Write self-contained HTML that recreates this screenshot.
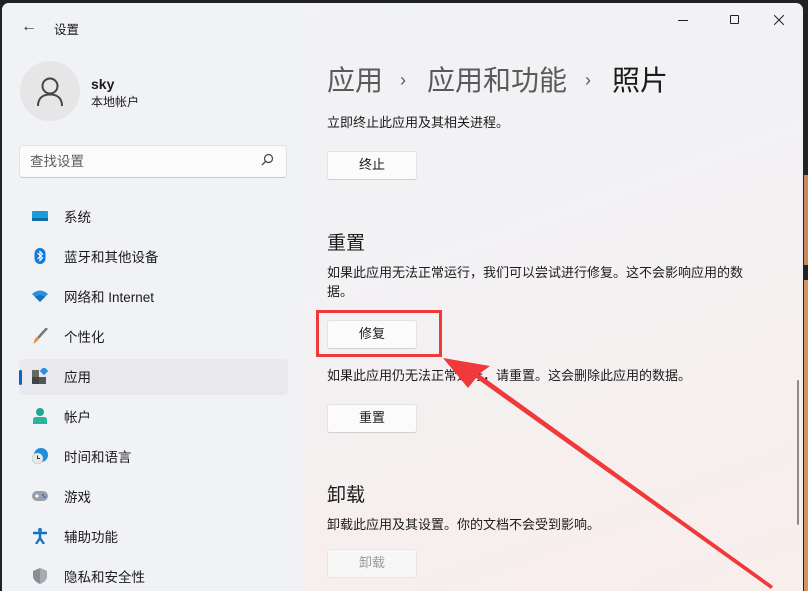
<!DOCTYPE html>
<html><head><meta charset="utf-8"><style>
*{margin:0;padding:0;box-sizing:border-box}
html,body{width:808px;height:591px;overflow:hidden}
body{background:#202225;font-family:"Liberation Sans","Noto Sans CJK SC",sans-serif;color:#1a1a1a;position:relative}
.win{position:absolute;left:2px;top:3px;width:801px;height:600px;border-radius:7px 7px 0 0;background:linear-gradient(160deg,#f2f3f6 0%,#f2f2f5 40%,#f6efee 75%,#f8eeec 100%);overflow:hidden}
.side{position:absolute;left:0;top:0;width:300px;height:600px;background:#f1f2f5}
.a{position:absolute;white-space:nowrap}
.nav{position:absolute;left:17px;width:269px;height:36px}
.nav .t{position:absolute;left:45px;top:7px;font-size:13.5px;color:#1b1b1b}
.nav .i{position:absolute;left:13px;top:9px;width:16px;height:16px}
.btn{position:absolute;left:325px;width:90px;height:29px;background:#fbfbfb;border:1px solid #e2e2e2;border-bottom-color:#cfcfcf;border-radius:3px;font-size:13px;text-align:center;line-height:26px;color:#1b1b1b}
.p{font-size:13px;color:#1b1b1b}
.bc{position:absolute;top:56px;font-size:28px;color:#5a5a5a}
.sep{position:absolute;top:67px;font-size:18px;color:#5a5a5a}
</style></head><body>
<div class="win">
<div class="side"></div>
<div class="a" style="left:19px;top:15px;font-size:16px;color:#333">&#8592;</div>
<div class="a" style="left:52px;top:16px;font-size:12.5px">设置</div>
<div class="a" style="left:18px;top:58px;width:60px;height:60px;border-radius:50%;background:#e6e6e6"></div>
<svg class="a" style="left:34px;top:74px" width="28" height="30" viewBox="0 0 28 30"><circle cx="14" cy="9" r="7.5" fill="none" stroke="#444" stroke-width="2"/><path d="M2 29 C2 20 8 17.5 14 17.5 C20 17.5 26 20 26 29" fill="none" stroke="#444" stroke-width="2"/></svg>
<div class="a" style="left:89px;top:73px;font-size:14px;font-weight:bold">sky</div>
<div class="a" style="left:89px;top:90px;font-size:12px">本地帐户</div>
<div class="a" style="left:17px;top:142px;width:268px;height:33px;background:#fbfbfb;border:1px solid #e3e3e3;border-bottom-color:#c8c8c8;border-radius:4px"></div>
<div class="a" style="left:28px;top:147px;font-size:13.5px;color:#5c5c5c">查找设置</div>
<svg class="a" style="left:259px;top:150px" width="13" height="13" viewBox="0 0 13 13"><circle cx="7.5" cy="5.5" r="4" fill="none" stroke="#444" stroke-width="1.2"/><path d="M4.6 8.4 L1 12" stroke="#444" stroke-width="1.3"/></svg>

<div class="nav" style="top:196px"><svg class="i" viewBox="0 0 16 16"><rect x="0" y="3" width="16" height="10" rx="1" fill="#1d9bd8"/><rect x="0" y="10" width="16" height="3" fill="#0e6ea3"/></svg><div class="t">系统</div></div>
<div class="nav" style="top:236px"><svg class="i" viewBox="0 0 16 16"><rect x="2.5" y="0" width="11" height="16" rx="5.5" fill="#0f7bdc"/><path d="M5.5 5 L10.5 10 L8 12.5 V3.5 L10.5 6 L5.5 11" fill="none" stroke="#fff" stroke-width="1.1"/></svg><div class="t">蓝牙和其他设备</div></div>
<div class="nav" style="top:276px"><svg class="i" viewBox="0 0 16 16"><path d="M0 6 Q8 -1 16 6 L8 14 Z" fill="#2a93e0"/><path d="M3 9 Q8 5 13 9 L8 14Z" fill="#1673c4"/></svg><div class="t">网络和 Internet</div></div>
<div class="nav" style="top:316px"><svg class="i" viewBox="0 0 16 16"><path d="M15 0 L6 10" stroke="#777" stroke-width="2.5"/><path d="M6 9 L1 16 L3 11Z M4 9 L7 11 L2 16Z" fill="#f08a2c"/></svg><div class="t">个性化</div></div>
<div class="nav" style="top:356px;background:#e9e9ed;border-radius:4px"><div class="a" style="left:0;top:11px;width:3px;height:15px;border-radius:2px;background:#0a63c7"></div><svg class="i" viewBox="0 0 16 16"><rect x="0" y="2" width="7" height="7" fill="#666"/><rect x="0" y="9" width="7" height="7" fill="#444"/><rect x="7" y="9" width="7" height="7" fill="#555"/><rect x="9" y="0" width="6" height="6" fill="#2a90e0" transform="rotate(45 12 3)"/></svg><div class="t">应用</div></div>
<div class="nav" style="top:396px"><svg class="i" viewBox="0 0 16 16"><circle cx="8" cy="4" r="4" fill="#20a58e"/><path d="M1 16 V12 Q1 9 4 9 H12 Q15 9 15 12 V16Z" fill="#2bb59c"/></svg><div class="t">帐户</div></div>
<div class="nav" style="top:436px"><svg class="i" viewBox="0 0 16 16"><circle cx="9" cy="7" r="7" fill="#1f8fdc"/><circle cx="5.5" cy="10.5" r="5.5" fill="#e8e8e8" stroke="#bbb" stroke-width=".5"/><path d="M5.5 7.5 V10.5 H8" stroke="#333" fill="none"/></svg><div class="t">时间和语言</div></div>
<div class="nav" style="top:476px"><svg class="i" viewBox="0 0 16 16"><rect x="0" y="3" width="16" height="10" rx="5" fill="#9a9ea5"/><path d="M3 8 H7 M5 6 V10" stroke="#fff" stroke-width="1.2"/><circle cx="11" cy="7" r="1" fill="#1a6fd0"/><circle cx="12.5" cy="9" r="1" fill="#1a6fd0"/></svg><div class="t">游戏</div></div>
<div class="nav" style="top:516px"><svg class="i" viewBox="0 0 16 16"><circle cx="8" cy="2" r="2" fill="#1673c4"/><path d="M1 5 L15 5 M8 5 V10 L4 16 M8 10 L12 16" stroke="#1673c4" stroke-width="2.4" fill="none"/></svg><div class="t">辅助功能</div></div>
<div class="nav" style="top:556px"><svg class="i" viewBox="0 0 16 16"><path d="M8 0 L15 3 V8 Q15 13 8 16 Q1 13 1 8 V3Z" fill="#8a8d93"/><path d="M8 0 L15 3 V8 Q15 13 8 16Z" fill="#a7aab0"/></svg><div class="t">隐私和安全性</div></div>

<div class="a" style="left:676px;top:17px;width:10px;height:1px;background:#222"></div>
<div class="a" style="left:728px;top:12px;width:9px;height:9px;border:1px solid #222;border-radius:1px"></div>
<svg class="a" style="left:772px;top:12px" width="10" height="10"><path d="M0 0 L10 10 M10 0 L0 10" stroke="#222"/></svg>

<div class="bc" style="left:325px">应用</div>
<div class="sep" style="left:398px">›</div>
<div class="bc" style="left:425px">应用和功能</div>
<div class="sep" style="left:583px">›</div>
<div class="bc" style="left:610px;color:#1a1a1a">照片</div>
<div class="a p" style="left:325px;top:109px">立即终止此应用及其相关进程。</div>
<div class="btn" style="top:148px">终止</div>
<div class="a" style="left:325px;top:225px;font-size:19px">重置</div>
<div class="a p" style="left:325px;top:259px">如果此应用无法正常运行，我们可以尝试进行修复。这不会影响应用的数</div>
<div class="a p" style="left:325px;top:278px">据。</div>
<div class="btn" style="top:317px">修复</div>
<div class="a" style="left:314px;top:307px;width:126px;height:47px;border:3px solid #ef3a3a"></div>
<div class="a p" style="left:325px;top:362px">如果此应用仍无法正常运行，请重置。这会删除此应用的数据。</div>
<div class="btn" style="top:401px">重置</div>
<div class="a" style="left:325px;top:477px;font-size:19px">卸载</div>
<div class="a p" style="left:325px;top:511px">卸载此应用及其设置。你的文档不会受到影响。</div>
<div class="btn" style="top:546px;color:#9a9a9a;background:#f7f7f7;border-color:#e6e6e6">卸载</div>
<div class="a" style="left:795px;top:377px;width:2px;height:145px;background:#8a8a8a;border-radius:1px"></div>
</div>
<div class="a" style="left:804px;top:175px;width:4px;height:90px;background:#c58a60"></div>
<div class="a" style="left:804px;top:280px;width:4px;height:311px;background:#d0946a"></div>
<svg class="a" style="left:0;top:0" width="808" height="591"><path d="M443 358 L490 366 L479 374 L773 586 L771 589 L476 378 L468 388 Z" fill="#f0393a"/></svg>
</body></html>
